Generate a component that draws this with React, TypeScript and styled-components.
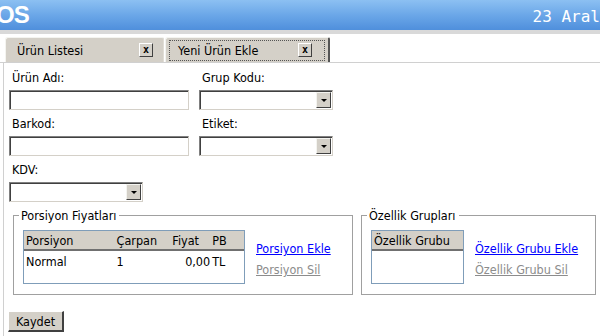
import styled, { createGlobalStyle } from "styled-components";

const GlobalStyle = createGlobalStyle`
  html, body {
    margin: 0;
    padding: 0;
    background: #ffffff;
  }
  body {
    font-family: "DejaVu Sans", Verdana, sans-serif;
    font-stretch: condensed;
    font-size: 12.5px;
    color: #000000;
    width: 600px;
    height: 336px;
    overflow: hidden;
  }
`;

const Page = styled.div`
  display: flex;
  flex-direction: column;
  width: 600px;
  height: 336px;
  overflow: hidden;
`;

const Header = styled.div`
  height: 30px;
  display: flex;
  align-items: center;
  justify-content: space-between;
  background: linear-gradient(to bottom, #8cc0f2 0%, #6ba7e8 50%, #4f8fdc 100%);
  border-bottom: 4px solid #d9d9d9;
  overflow: hidden;
`;

const Logo = styled.span`
  font-family: "Liberation Sans", Arial, sans-serif;
  font-stretch: normal;
  font-weight: bold;
  font-size: 24px;
  color: #ffffff;
  margin-left: -4px;
  letter-spacing: -1px;
`;

const DateText = styled.span`
  font-family: "DejaVu Sans Mono", "Liberation Mono", monospace;
  font-stretch: normal;
  font-size: 16px;
  color: #ffffff;
  white-space: nowrap;
  margin-top: 2px;
`;

const TabBar = styled.div`
  display: flex;
  padding: 3px 0 0 5px;
  height: 25px;
  border-bottom: 1px solid #d0d0d0;
`;

const Tab = styled.div<{ $active?: boolean }>`
  position: relative;
  display: flex;
  align-items: center;
  justify-content: space-between;
  box-sizing: border-box;
  width: ${(p) => (p.$active ? 165 : 159)}px;
  height: 25px;
  padding: 0 ${(p) => (p.$active ? 16 : 10)}px 0 ${(p) => (p.$active ? 12 : 11)}px;
  background: #d4d0c8;
  border-top: 1px solid #f4f4f0;
  border-left: 1px solid #f4f4f0;
  border-right: ${(p) => (p.$active ? "2px solid #555555" : "1px solid #e0ddd6")};
  border-top-left-radius: 3px;
  border-top-right-radius: 2px;
  margin-right: 1px;
  ${(p) =>
    p.$active &&
    `
    &::after {
      content: "";
      position: absolute;
      left: 3px;
      top: 2px;
      right: 3px;
      bottom: 1px;
      border: 1px dotted #555555;
      pointer-events: none;
    }
  `}
`;

const CloseBox = styled.span`
  width: 14px;
  height: 14px;
  box-sizing: border-box;
  display: flex;
  align-items: center;
  justify-content: center;
  background: #d4d0c8;
  border-top: 1px solid #ffffff;
  border-left: 1px solid #ffffff;
  border-right: 1px solid #404040;
  border-bottom: 1px solid #404040;
  font-family: "DejaVu Sans Mono", monospace;
  font-stretch: normal;
  font-size: 10px;
  font-weight: bold;
  line-height: 1;
`;

const Panel = styled.div`
  flex: 1;
  margin-left: 3px;
  border-left: 1px solid #d0d0d0;
  padding: 6px 0 0 5px;
`;

const FormGrid = styled.div`
  display: grid;
  grid-template-columns: 180px 134px;
  column-gap: 10px;
`;

const Field = styled.div<{ $span?: boolean }>`
  display: flex;
  flex-direction: column;
  height: 46px;
  grid-column: ${(p) => (p.$span ? "1 / span 2" : "auto")};
`;

const Label = styled.label`
  height: 21px;
  line-height: 18px;
  padding-left: 3px;
`;

const TextBox = styled.div<{ $w?: number }>`
  box-sizing: border-box;
  width: ${(p) => p.$w ?? 180}px;
  height: 20px;
  background: #ffffff;
  border-top: 1px solid #808080;
  border-left: 1px solid #808080;
  border-right: 1px solid #d4d0c8;
  border-bottom: 1px solid #d4d0c8;
  box-shadow: inset 1px 1px 0 #404040;
  display: flex;
  justify-content: flex-end;
`;

const DropButton = styled.span`
  width: 15px;
  height: 16px;
  margin: 1px 1px 0 0;
  box-sizing: border-box;
  background: #d4d0c8;
  border-top: 1px solid #f4f4f0;
  border-left: 1px solid #f4f4f0;
  border-right: 1px solid #404040;
  border-bottom: 1px solid #404040;
  display: flex;
  align-items: center;
  justify-content: center;
  &::before {
    content: "";
    border-left: 3px solid transparent;
    border-right: 3px solid transparent;
    border-top: 3px solid #000000;
  }
`;

const GroupRow = styled.div`
  display: flex;
  gap: 8px;
  margin: 0 0 0 4px;
  padding-top: 1px;
`;

const Group = styled.fieldset<{ $w: number }>`
  box-sizing: border-box;
  width: ${(p) => p.$w}px;
  height: 87px;
  margin: 0;
  padding: 7px 0 0 9px;
  border: 1px solid #a0a0a0;
  border-radius: 0;
  display: flex;
  align-items: flex-start;
  gap: 11px;
  legend {
    padding: 0 3px 0 2px;
    margin-left: -4px;
  }
`;

const ListBox = styled.div<{ $w: number }>`
  box-sizing: border-box;
  width: ${(p) => p.$w}px;
  height: 54px;
  border: 1px solid #7f9db9;
  background: #ffffff;
`;

const ListHead = styled.div`
  display: flex;
  height: 18px;
  align-items: center;
  background: #d4d0c8;
  border-bottom: 2px solid #707070;
`;

const ListRow = styled.div`
  display: flex;
  height: 18px;
  align-items: center;
  margin-top: 1px;
`;

const Cell = styled.span<{ $w: number; $right?: boolean }>`
  width: ${(p) => p.$w}px;
  padding-left: 2px;
  box-sizing: border-box;
  text-align: ${(p) => (p.$right ? "right" : "left")};
  white-space: nowrap;
`;

const Links = styled.div`
  display: flex;
  flex-direction: column;
  gap: 6px;
  padding-top: 11px;
`;

const LinkText = styled.a<{ $disabled?: boolean }>`
  text-decoration: underline;
  color: ${(p) => (p.$disabled ? "#8c8c8c" : "#0000ff")};
  cursor: pointer;
  white-space: nowrap;
`;

const SaveButton = styled.button`
  margin: 16px 0 0 -1px;
  width: 56px;
  height: 21px;
  padding: 0;
  box-sizing: border-box;
  background: #d4d0c8;
  border-top: 1px solid #ffffff;
  border-left: 1px solid #ffffff;
  border-right: 2px solid #404040;
  border-bottom: 2px solid #404040;
  font-family: "DejaVu Sans", Verdana, sans-serif;
  font-stretch: condensed;
  font-size: 12.5px;
  color: #000000;
`;

export default function App() {
  return (
    <Page>
      <GlobalStyle />
      <Header>
        <Logo>OS</Logo>
        <DateText>23 Aral</DateText>
      </Header>
      <TabBar>
        <Tab>
          Ürün Listesi
          <CloseBox>x</CloseBox>
        </Tab>
        <Tab $active>
          Yeni Ürün Ekle
          <CloseBox>x</CloseBox>
        </Tab>
      </TabBar>
      <Panel>
        <FormGrid>
          <Field>
            <Label>Ürün Adı:</Label>
            <TextBox />
          </Field>
          <Field>
            <Label>Grup Kodu:</Label>
            <TextBox $w={134}>
              <DropButton />
            </TextBox>
          </Field>
          <Field>
            <Label>Barkod:</Label>
            <TextBox />
          </Field>
          <Field>
            <Label>Etiket:</Label>
            <TextBox $w={134}>
              <DropButton />
            </TextBox>
          </Field>
          <Field $span>
            <Label>KDV:</Label>
            <TextBox $w={134}>
              <DropButton />
            </TextBox>
          </Field>
        </FormGrid>
        <GroupRow>
          <Group $w={340}>
            <legend>Porsiyon Fiyatları</legend>
            <ListBox $w={222}>
              <ListHead>
                <Cell $w={91}>Porsiyon</Cell>
                <Cell $w={56}>Çarpan</Cell>
                <Cell $w={40}>Fiyat</Cell>
                <Cell $w={34}>PB</Cell>
              </ListHead>
              <ListRow>
                <Cell $w={91}>Normal</Cell>
                <Cell $w={56}>1</Cell>
                <Cell $w={40} $right>0,00</Cell>
                <Cell $w={34}>TL</Cell>
              </ListRow>
            </ListBox>
            <Links>
              <LinkText>Porsiyon Ekle</LinkText>
              <LinkText $disabled>Porsiyon Sil</LinkText>
            </Links>
          </Group>
          <Group $w={235}>
            <legend>Özellik Grupları</legend>
            <ListBox $w={93}>
              <ListHead>
                <Cell $w={92}>Özellik Grubu</Cell>
              </ListHead>
            </ListBox>
            <Links>
              <LinkText>Özellik Grubu Ekle</LinkText>
              <LinkText $disabled>Özellik Grubu Sil</LinkText>
            </Links>
          </Group>
        </GroupRow>
        <SaveButton>Kaydet</SaveButton>
      </Panel>
    </Page>
  );
}
